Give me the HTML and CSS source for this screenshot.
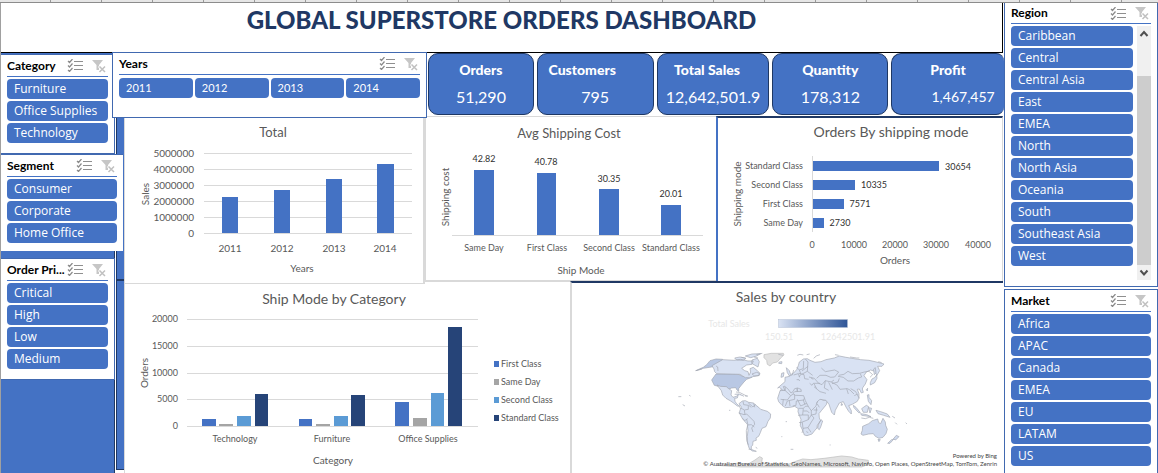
FILE: index.html
```html
<!DOCTYPE html>
<html lang="en">
<head>
<meta charset="utf-8">
<title>Global Superstore Orders Dashboard</title>
<link rel="stylesheet" href="styles.css">
</head>
<body>
<svg class="defs" aria-hidden="true">
  <symbol id="multi" viewBox="0 0 16 13">
    <path d="M1 2l1.500 1.500L5.500 0M1 6.500L2.500 8 5.500 4.500M1 11l1.500 1.500L5.500 9" fill="none" stroke="#8a8a8a" stroke-width="1.200"/>
    <path d="M7 2.500h9M7 6.500h9M7 10.500h9" stroke="#8f8f8f" stroke-width="1.200"/>
  </symbol>
  <symbol id="clear" viewBox="0 0 14 14">
    <path d="M0 1h11L7 6v5H4.500V6z" fill="#c6c6c6"/>
    <path d="M7 7l6 6M13 7l-6 6" stroke="#fff" stroke-width="3"/>
    <path d="M7.500 7.500l5.500 5.500M13 7.500L7.500 13" stroke="#c0c0c0" stroke-width="1.500"/>
  </symbol>
</svg>
<div class="ruler"></div>
<div class="page">
  <main class="board">
    <header class="banner"><h1>GLOBAL SUPERSTORE ORDERS DASHBOARD</h1></header>
    <div class="content">
      <aside class="filters">
        <div class="stack">
          <section class="slicer category">
            <div class="head"><h2>Category</h2><button class="tool" aria-label="Multi-select"><svg class="multi"><use href="#multi"/></svg></button><button class="tool" aria-label="Clear filter"><svg class="clear"><use href="#clear"/></svg></button></div>
            <div class="items"><button>Furniture</button><button>Office Supplies</button><button>Technology</button></div>
          </section>
          <section class="slicer segment">
            <div class="head"><h2>Segment</h2><button class="tool" aria-label="Multi-select"><svg class="multi"><use href="#multi"/></svg></button><button class="tool" aria-label="Clear filter"><svg class="clear"><use href="#clear"/></svg></button></div>
            <div class="items"><button>Consumer</button><button>Corporate</button><button>Home Office</button></div>
          </section>
          <section class="slicer priority">
            <div class="head"><h2>Order Pri...</h2><button class="tool" aria-label="Multi-select"><svg class="multi"><use href="#multi"/></svg></button><button class="tool" aria-label="Clear filter"><svg class="clear"><use href="#clear"/></svg></button></div>
            <div class="items"><button>Critical</button><button>High</button><button>Low</button><button>Medium</button></div>
          </section>
        </div>
        <div class="strip"><div class="upper"></div><div class="lower"></div></div>
      </aside>
      <div class="center">
        <div class="top">
          <section class="slicer years">
            <div class="head"><h2>Years</h2><button class="tool" aria-label="Multi-select"><svg class="multi"><use href="#multi"/></svg></button><button class="tool" aria-label="Clear filter"><svg class="clear"><use href="#clear"/></svg></button></div>
            <div class="items"><button>2011</button><button>2012</button><button>2013</button><button>2014</button></div>
          </section>
          <div class="cards">
            <div class="card"><h3>Orders</h3><p>51,290</p></div>
            <div class="card customers"><h3>Customers</h3><p>795</p></div>
            <div class="card sales"><h3>Total Sales</h3><p>12,642,501.9</p></div>
            <div class="card"><h3>Quantity</h3><p>178,312</p></div>
            <div class="card profit"><h3>Profit</h3><p>1,467,457</p></div>
          </div>
        </div>
        <div class="row three">
          <figure class="total">
            <svg viewBox="125 116 298 167" role="img" aria-label="Total sales by year">
              <text class="t13" x="273" y="137">Total</text>
              <path class="grid" d="M204 153.500h208M204 169.500h208M204 185.500h208M204 201.500h208M204 217.500h208M204 233.500h208"/>
              <g class="t10 end"><text x="194" y="157">5000000</text><text x="194" y="173">4000000</text><text x="194" y="189">3000000</text><text x="194" y="205">2000000</text><text x="194" y="221">1000000</text><text x="194" y="237">0</text></g>
              <path class="c1" d="M222 197h16v36h-16zM274 190h16v43h-16zM326 179h16v54h-16zM377 164h17v69h-17z"/>
              <g class="t10"><text x="230" y="252">2011</text><text x="282" y="252">2012</text><text x="334" y="252">2013</text><text x="385" y="252">2014</text><text x="302" y="272">Years</text><text transform="translate(149 194) rotate(-90)">Sales</text></g>
            </svg>
          </figure>
          <figure class="cost">
            <svg viewBox="426 117 290 163" role="img" aria-label="Average shipping cost">
              <text class="t13" x="569" y="138">Avg Shipping Cost</text>
              <path class="grid" d="M452 235.500h251"/>
              <path class="c1" d="M474 170h20v65h-20zM537 173h19v62h-19zM599 189h20v46h-20zM661 205h20v30h-20z"/>
              <g class="t9 dark"><text x="484" y="162">42.82</text><text x="546" y="165">40.78</text><text x="609" y="182">30.35</text><text x="671" y="197">20.01</text></g>
              <g class="t9"><text x="484" y="251">Same Day</text><text x="547" y="251">First Class</text><text x="609" y="251">Second Class</text><text x="671" y="251">Standard Class</text></g>
              <g class="t10"><text x="581" y="274">Ship Mode</text><text transform="translate(449 197) rotate(-90)">Shipping cost</text></g>
            </svg>
          </figure>
          <figure class="mode">
            <svg viewBox="718 118 284 163" role="img" aria-label="Orders by shipping mode">
              <text class="t14" x="891" y="137">Orders By shipping mode</text>
              <path class="grid" d="M812.500 156v76"/>
              <path class="c1" d="M813 161h126v10h-126zM813 180h42v10h-42zM813 199h31v10h-31zM813 218h11v10h-11z"/>
              <g class="t9 end"><text x="803" y="169">Standard Class</text><text x="803" y="188">Second Class</text><text x="803" y="207">First Class</text><text x="803" y="226">Same Day</text></g>
              <g class="t9 dark"><text x="958" y="170">30654</text><text x="874" y="188">10335</text><text x="860" y="207">7571</text><text x="840" y="226">2730</text></g>
              <g class="t9"><text x="812" y="248">0</text><text x="854" y="248">10000</text><text x="895" y="248">20000</text><text x="936" y="248">30000</text><text x="978" y="248">40000</text></g>
              <g class="t10"><text x="895" y="264">Orders</text><text transform="translate(741 194) rotate(-90)">Shipping mode</text></g>
            </svg>
          </figure>
        </div>
        <div class="row two">
          <figure class="bycat">
            <svg viewBox="125 282 445 191" role="img" aria-label="Ship mode by category">
              <text class="t14" x="334" y="304">Ship Mode by Category</text>
              <path class="grid" d="M187 319.500h291M187 346.500h291M187 373.500h291M187 399.500h291M187 426.500h291"/>
              <g class="t9 end"><text x="178" y="322">20000</text><text x="178" y="349">15000</text><text x="178" y="376">10000</text><text x="178" y="402">5000</text><text x="178" y="429">0</text></g>
              <path class="c1" d="M202 419h14v7h-14zM299 419h13v7h-13zM395 402h14v24h-14zM494 361h5v6h-5z"/>
              <path class="c2" d="M219 424h14v2h-14zM316 424h14v2h-14zM413 418h14v8h-14zM494 379h5v6h-5z"/>
              <path class="c3" d="M237 416h14v10h-14zM334 416h14v10h-14zM431 393h13v33h-13zM494 397h5v6h-5z"/>
              <path class="c4" d="M255 394h13v32h-13zM351 395h14v31h-14zM448 327h14v99h-14zM494 415h5v6h-5z"/>
              <g class="t9"><text x="235" y="442">Technology</text><text x="332" y="442">Furniture</text><text x="428" y="442">Office Supplies</text></g>
              <g class="t9 start"><text x="501" y="367">First Class</text><text x="501" y="385">Same Day</text><text x="501" y="403">Second Class</text><text x="501" y="421">Standard Class</text></g>
              <g class="t10"><text x="333" y="464">Category</text><text transform="translate(148 373) rotate(-90)">Orders</text></g>
            </svg>
          </figure>
          <figure class="world">
            <svg viewBox="572 283 431 190" role="img" aria-label="Sales by country">
              <defs><linearGradient id="scale"><stop offset="0" stop-color="#d9e2f3"/><stop offset="1" stop-color="#2f5597"/></linearGradient></defs>
              <text class="t14" x="786" y="302">Sales by country</text>
              <rect x="778.500" y="319.500" width="69" height="8" fill="url(#scale)" stroke="#b4bfd3" stroke-width=".5"/>
              <g class="t9 faint"><text x="729" y="327">Total Sales</text><text x="779" y="340">150.51</text><text x="848" y="340">12642501.91</text></g>
              <g class="map" transform="translate(660 280) scale(.3333)">
                <path class="none" d="M312 224l22-4 36 0 2 5-10 9-10 12-14 3-8 9-8-5-2-12-8-8zM170 556l60-6 35 2 20-12 14-10 8 4-2 14 30 6 50-1 25-10 18-6 25 2 40-4 52-7 30 3 20 6 30 4 0 12-20 8H240z"/>
                <path class="usa" d="M130 262l10-8 10-12 18-5 20 1-14 20 4 8-18-6-30 5-22 7 12-6zM168 282h60l10 2 8 4 18 3 10-3 2 4-16 6-8 8-10 12-6 8v8l-5-4-4-7-12 1-10 4-10-6-16-2-16-4-8-16z"/>
                <path d="M188 239l34 2 20-3 22 5 16 0-4 10-16 2-15 10 9 7 10 3 3 11 5-10-2-10 10-4 12 10 8 8-2 6-20 4-10 3-12 0-8-5-8-5-70-2-6-6-2-8-6-10zM276 240l16-5 6 10-4 16-9-5-10-6zM224 234l16-3 18 4-8 6-20-1zM256 228l20-6 26-1-12 7-18 5zM276 282l14-5 8 3-2 7-12 1z"/>
                <path d="M171 315l10 4 18 1 7 6 9 6-2 13 6 7 10-3 6-5-3 10-8 1 1 9 4 6 6 6 5 3-8-1-10-8-10-7-14-8-10-10-4-13zM224 343l14-1 14 7M255 348h9"/>
                <path d="M237 371l10-8 9-1 10 5 14 2 8 7 8 6 6 6 20 6 10 8-1 12-7 10-6 16-12 5-5 13-5 11-8 5 1 7-10 3-1 12-4 3 0 9 9 4 6 2-12-1-9-7-5-15-1-22 2-18-2-18-14-16-10-18 2-8 4-10z"/>
                <path class="edge" d="M249 364l2 10 14 2 0 12-12 2 2 14M265 369l14 12 8-8M238 383l14 6M236 399l16 5 8-2 12 12 10 10 2 9-9 11 4 12M248 415l6 7 9-6M260 418l4 17 10-1 9 7M263 436l-4 16 1 30 5 12M281 370l3 12M266 376l8 6"/>
                <path d="M360 333l16-22 13-5 20-4 7 4 4 8 17 3 8-3 16 3 7 18 13 22 10 4 12-2-4 15-14 17-8 10 1 13 4 8-10 14-1 8-8 9-7 9-15 5-8-2-4-12-8-16 2-19-5-12-4-11 1-9-11-7-13 3-15 1-10-7-10-11-3-10zM475 434l8-15 5 4-6 18-4 8-5-4z"/>
                <path class="edge" d="M360 332l15-1 17 16 12-7 9 1-2-21-5-14M375 311l1 20M392 347l-10 13-20-2M404 341l0 17-22 5-6 15M411 319l1 22 16-8 0-17M428 333l10 10 24 1M438 316v27l-7 17-22 3-1 13-10 2M462 330h-24M462 344l-4 24-24 4-4-12M412 358l10 20 14-6M416 385h14l6-6 18-1 4-8 14 2 6 10M458 344l17 13-4 12-16-1M430 385l-2 20-14 1M428 405h17l0 14-20 8-8 1M445 419l9-14 14-3M454 378v27l8 9-8 12M454 426l-10 17-15 2-2-18M444 443l9 14M430 445l-4 14M470 382l-2 20M388 362l2 16M370 358l-2 18M461 390h12M430 393h12l6 6M439 455l6 3"/>
                <path d="M375 305v-13l14-3-7-11-3-15 9 9 4 12 9-5 9-10 5-12 3-11 12-9 12-1 8 5 15 6 18-2 15-6 25-5 15-6 20 4 24 4 20 3 25 2 22 5 23 6-6 7-13 0 6 13-8 14-7-12-12-4-13 6-7 11 9 12-5 13-7 10-2 5 3 10-6 2-6-12-6 1 5 13 0 13-5 10-15 9-11 4 8 15 0 10-8-8-8-13-8-16-12 4-12 22-3 14-8-8-8-24-9-12-18-3-9 8-3 12-14 14-8-11-10-19-5-15-25-1-7-6 5-5 20-1-1-6-10-4-9 2-5 9-6 4-10-13-9-7-4 1 5 12-7-2-10-8-5 2z"/>
                <path class="edge" d="M410 262l8 8 12-4 1-23M401 270l-4 15-9 2M401 285l14-4 4 11M418 270l5 13-6 8M425 283l17-9 16 12M442 274l2-28-8-9M444 259l-18 14M416 280l16 4 2 12 12 2M447 291l16 4 13 15 10 4 10-12 18 4 8-6M470 295l10-9 18 0 14 6 12-1 12-15-12-6-28 5-12-11M496 302l-3 22 13 7M506 307l11 22M480 310l-20 0-4 6-7-6M462 320l18 15 18 5M462 311l8 15M514 306l18 10 8 12 22-2 8 4 12 12M538 295l-4 11-18 5M536 286l16-3 12-9 13 7 22-1 14-4 14-2 11 10-8 8M534 289l16 3 14 11 17 0 14-9 10-3-4-10M560 326l5 16M572 326l14 8 7 10M583 347l8-4 7 12"/>
                <path d="M365 280l7-2-2 12-7 2zM358 246l8-1-1 6-9-1zM636 297l8-4 6-8 1 10-7 13-13 7 0-7zM641 267l5-4 2 16-5 5zM622 345l5-1 0 8 8 10-2 12-8-10zM580 376l8 6 13 16-5 0-14-15zM602 401l18 3 13 6-28-4zM605 386l14-10 7 4-4 17-12 0zM626 383l9 2-5 14zM648 391l14 4 20 7 8 10-19-6-17-5zM545 370l3 5-5 1zM619 329l4-4-1 8z"/>
                <path class="aus" d="M608 439l18-8 11-9 16-5 3 11 6 3 7-16 7 11 1 10 5 12-4 13-9 11-12 3-11-6-6-8-14 1-17 4-6-4 4-11zM654 478l7 1-4 6zM709 466l8 4-10 10-7-3zM701 478l-11 12-7 0 12-11z"/>
                <path class="edge" d="M106 272l10-2 10-3M55 350h9M68 374l7 4M88 345l3 4M168 258l5 3 1 12M228 336l10 1 16 8 8 4M207 391h4M377 425h4M364 470h3M392 508h8M509 495h3M266 508h8M287 502l5 3M737 428l4 4M706 428l5 5M697 409l8 5M604 414l12 2 12-4 12 3M410 299l7 0 2 4M453 294l7 4M355 223l14 3M412 226l8-3 10 2M440 224l9-2M461 235l8-7 11-4M525 224l11 2M570 231l20 3 8 0M655 245l10 3M244 232l12 2M282 231l12 3M289 224l18-4"/>
              </g>
              <g class="credits"><text x="997" y="458">Powered by Bing</text><text x="997" y="466">© Australian Bureau of Statistics, GeoNames, Microsoft, NavInfo, Open Places, OpenStreetMap, TomTom, Zenrin</text></g>
            </svg>
          </figure>
        </div>
      </div>
    </div>
  </main>
  <aside class="side">
    <section class="slicer region">
      <div class="head"><h2>Region</h2><button class="tool" aria-label="Multi-select"><svg class="multi"><use href="#multi"/></svg></button><button class="tool" aria-label="Clear filter"><svg class="clear"><use href="#clear"/></svg></button></div>
      <div class="scroller">
        <div class="items"><button>Caribbean</button><button>Central</button><button>Central Asia</button><button>East</button><button>EMEA</button><button>North</button><button>North Asia</button><button>Oceania</button><button>South</button><button>Southeast Asia</button><button>West</button></div>
        <div class="bar">
          <button aria-label="Scroll up"><svg viewBox="0 0 14 15"><path d="M3.500 10L7 6l3.500 4"/></svg></button>
          <div class="thumb"></div>
          <button aria-label="Scroll down"><svg viewBox="0 0 14 15"><path d="M3.500 5.500L7 9.500l3.500-4"/></svg></button>
        </div>
      </div>
    </section>
    <section class="slicer market">
      <div class="head"><h2>Market</h2><button class="tool" aria-label="Multi-select"><svg class="multi"><use href="#multi"/></svg></button><button class="tool" aria-label="Clear filter"><svg class="clear"><use href="#clear"/></svg></button></div>
      <div class="items"><button>Africa</button><button>APAC</button><button>Canada</button><button>EMEA</button><button>EU</button><button>LATAM</button><button>US</button></div>
    </section>
  </aside>
</div>
</body>
</html>
```
FILE: styles.css
```css
* { box-sizing: border-box; }
body {
  margin: 0;
  min-height: 100vh;
  display: flex;
  flex-direction: column;
  background: #fff;
  font-family: Lato, "Open Sans", sans-serif;
  color: #000;
}
h1, h2, h3, p, figure { margin: 0; }
button { font: inherit; border: 0; padding: 0; }
.defs { position: absolute; width: 0; height: 0; }

.ruler {
  height: 3px;
  border-bottom: 1px solid #8c8c8c;
  background: repeating-linear-gradient(90deg, #e6e6e6 0 50px, #999 50px 51px);
}
.page { flex: 1; display: flex; }
.board { flex: 1; min-width: 0; display: flex; flex-direction: column; border-left: 1px solid #a0a0a0; }
.banner {
  height: 50px;
  margin-right: 1px;
  padding-top: 3px;
  border-right: 1px solid #000;
  border-bottom: 1px solid #000;
  text-align: center;
}
.banner h1 {
  font-size: 24px;
  line-height: 28px;
  font-weight: 900;
  color: #203864;
}
.content { flex: 1; display: flex; }

/* slicers */
.slicer { background: #fff; border: 1px solid #4169b0; padding: 0 6px; position: relative; }
.head {
  display: flex;
  align-items: center;
  height: 22px;
  border-bottom: 1px solid #4472c4;
  padding-right: 2px;
}
.head h2 { flex: 1; font-size: 12px; line-height: 16px; font-weight: bold; white-space: nowrap; }
.tool { background: none; display: flex; }
.tool + .tool { margin-left: 9px; }
.multi { width: 16px; height: 13px; }
.clear { width: 14px; height: 14px; }
.items { display: grid; gap: 2px; padding-top: 2px; align-content: start; }
.items button {
  height: 20px;
  padding: 0 7px;
  border-radius: 4px;
  background: #4472c4;
  color: #fff;
  font-family: "Open Sans", sans-serif;
  font-size: 12px;
  line-height: 20px;
  text-align: left;
  white-space: nowrap;
}

.filters { width: 123px; display: flex; background: #fff; }
.stack {
  width: 114px;
  background: #4472c4;
  border-right: 1px solid #1f3864;
}
.stack .slicer { border-left: 0; }
.category { margin: 1px -1px 0 0; height: 100px; }
.segment { margin-right: -9px; height: 97px; z-index: 1; border-right: 0; border-bottom: 0; }
.priority { margin: 7px -1px 0 0; height: 122px; }
.strip { width: 8px; margin-left: 1px; padding-bottom: 3px; display: flex; flex-direction: column; }
.upper { height: 227px; background: #4472c4; border-bottom: 1px solid #1f3864; border-left: 1px solid #1f3864; }
.lower { flex: 1; background: #4472c4; border: 1px solid #1f3864; border-right: 0; }

.center { flex: 1; min-width: 0; }
.top { display: flex; height: 63px; }
.years { width: 315px; height: 66px; margin: -1px 0 0 -12px; z-index: 2; }
.years .items { grid-template-columns: repeat(4, 1fr); padding-top: 3px; }
.years .items button { font-family: Lato, sans-serif; font-size: 11px; }
.cards {
  flex: 1;
  display: grid;
  grid-template-columns: 106fr 117fr 113fr 116fr 113fr;
  gap: 3px;
  padding: 0 0 1px 1px;
}
.card {
  display: flex;
  flex-direction: column;
  border: 1px solid #1f3864;
  border-radius: 10px;
  background: #4472c4;
  color: #fff;
  text-align: center;
  white-space: nowrap;
  padding-top: 6px;
}
.card h3 { font-size: 14px; line-height: 20px; font-weight: 900; }
.card p { font-size: 16px; line-height: 24px; margin-top: 5px; }
.customers h3 { padding-right: 26px; }
.sales h3 { padding-right: 12px; }
.profit { border-right: 0; border-radius: 10px 8px 8px 10px; }
.profit p { font-size: 14px; padding-left: 30px; }

/* charts */
.row { display: grid; align-items: start; padding-right: 1px; }
.three { grid-template-columns: 301fr 291fr 287fr; }
.two { grid-template-columns: 446fr 433fr; }
figure { background: #fff; position: relative; min-width: 0; }
figure svg { display: block; width: 100%; height: auto; }
.total { border: solid #d9d9d9; border-width: 0 2px 1px 1px; margin-bottom: -3px; z-index: 1; }
.cost { border: solid #d9d9d9; border-width: 1px 0 1px 1px; }
.mode { border: solid #d9d9d9; border-width: 2px 1px 0 2px; border-top-color: #1f3864; border-left-color: #4472c4; }
.bycat { border: solid #d9d9d9; border-width: 1px 0 0 1px; }
.world { border: solid #d9d9d9; border-width: 2px 0 0 2px; border-top-color: #1f3864; }
figure text { fill: #595959; text-anchor: middle; }
.t14 { font-size: 14px; }
.t13 { font-size: 13px; }
.t10 { font-size: 10px; }
.t9 { font-size: 9px; }
.end text { text-anchor: end; }
.start text { text-anchor: start; }
.dark text { fill: #303030; }
.faint text { fill: #e7e7e7; }
.credits text { font-size: 6px; text-anchor: end; fill: #444; }
.grid { stroke: #d9d9d9; fill: none; }
.c1 { fill: #4472c4; }
.c2 { fill: #a5a5a5; }
.c3 { fill: #5b9bd5; }
.c4 { fill: #264478; }
.map path { fill: #d9e2f3; stroke: #a3a8b2; stroke-width: 2; }
.map .usa { fill: #b9c8e4; }
.map .aus { fill: #cfdaef; }
.map .none { fill: #e2e2e2; stroke: #bbb; }
.map .edge { fill: none; }

/* right side */
.side { width: 154px; display: flex; flex-direction: column; gap: 2px; }
.region { border-top: 0; height: 284px; }
.region .head { height: 21px; }
.scroller { display: flex; gap: 4px; padding-top: 2px; }
.scroller .items { flex: 1; padding: 0; }
.bar { width: 14px; height: 254px; display: flex; flex-direction: column; background: #f0f0f0; }
.bar button { height: 15px; background: #f0f0f0; }
.bar svg { display: block; width: 14px; height: 15px; }
.bar path { fill: none; stroke: #505050; stroke-width: 2; }
.thumb { flex: 1; margin-top: 35px; background: #cdcdcd; }
.market { flex: 1; border-bottom: 0; }
```
